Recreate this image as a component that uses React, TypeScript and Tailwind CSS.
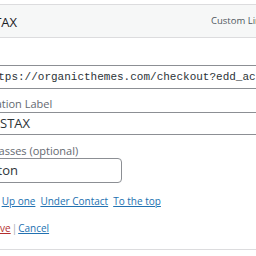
import React from 'react';

const sans = { fontFamily: '"Open Sans", "Liberation Sans", sans-serif' };
const mono = { fontFamily: '"Liberation Mono", "DejaVu Sans Mono", monospace' };

export default function App() {
  return (
    <div className="w-[256px] h-[256px] overflow-hidden bg-white" style={sans}>
      <div className="h-1" />
      {/* item handle */}
      <div className="h-[34px] w-[400px] border-y border-[#dcdcde] bg-[#f6f7f7] flex items-center">
        <div className="w-[211px] shrink-0 whitespace-nowrap">
          <span className="-ml-[13px] inline-block text-[13px] font-medium text-[#1d2327]">STAX</span>
        </div>
        <span className="text-[9.5px] text-[#50575e] whitespace-nowrap">Custom Link</span>
      </div>

      <div className="mt-[27px]">
        <div className="-ml-[24px] w-[400px] h-[24px] border border-[#8c8f94] rounded-[4px] flex items-center pl-2 whitespace-nowrap text-[11px] text-[#2c3338]" style={mono}>
          https://organicthemes.com/checkout?edd_action=add_to_cart&amp;download_id=12
        </div>

        <div className="mt-[7px] -ml-[33px] h-4 leading-4 text-[11px] text-[#646970] whitespace-nowrap">Navigation Label</div>
        <div className="-ml-[9px] w-[400px] h-[23px] border border-[#8c8f94] rounded-[4px] flex items-center pl-2 text-[13px] text-[#2c3338]">
          STAX
        </div>

        <div className="mt-[9px] -ml-[33px] h-[14px] leading-[14px] text-[11px] text-[#646970] whitespace-nowrap">CSS Classes (optional)</div>
        <div className="-ml-[32px] w-[154px] h-[25px] border border-[#8c8f94] rounded-[4px] flex items-center pl-2 text-[13px] text-[#2c3338]">
          button
        </div>

        <div className="mt-[10px] h-4 leading-4 flex items-center gap-[5px] -ml-[33px] text-[10px] whitespace-nowrap">
          <span className="text-[#50575e] mr-[4px]">Move</span>
          <a className="text-[#2271b1] underline">Up one</a>
          <a className="text-[#2271b1] underline">Under Contact</a>
          <a className="text-[#2271b1] underline">To the top</a>
        </div>

        <div className="mt-[11px] h-4 leading-4 flex items-center -ml-[27px] text-[10px] whitespace-nowrap">
          <a className="text-[#b32d2e] underline">Remove</a>
          <span className="text-[#a7aaad] mx-px">|</span>
          <a className="text-[#2271b1] underline">Cancel</a>
        </div>

        <div className="mt-[13px] border-t border-[#dcdcde]" />
      </div>
    </div>
  );
}
